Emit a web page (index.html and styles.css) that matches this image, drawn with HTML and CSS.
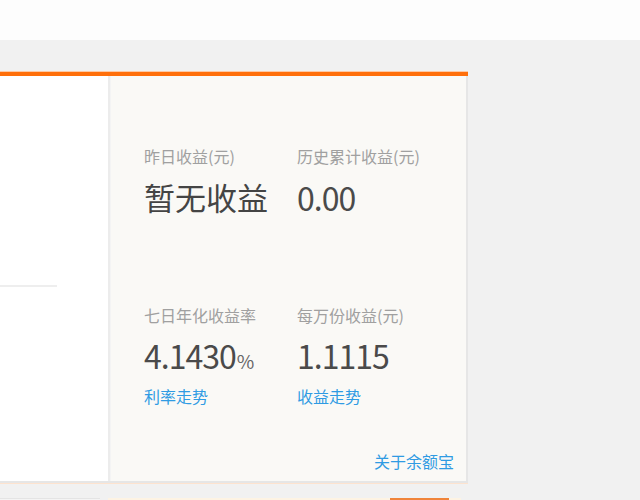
FILE: index.html
```html
<!DOCTYPE html>
<html lang="zh-CN">
<head>
<meta charset="utf-8">
<title>余额宝</title>
<link rel="stylesheet" href="styles.css">
</head>
<body>
<div class="header"></div>
<div class="main">
  <div class="panel">
    <div class="left-col">
      <div class="left-line"></div>
    </div>
    <div class="right-col">
      <div class="stats">
        <div class="stat">
          <div class="label">昨日收益(元)</div>
          <div class="value cjk">暂无收益</div>
        </div>
        <div class="stat">
          <div class="label">历史累计收益(元)</div>
          <div class="value num">0.00</div>
        </div>
        <div class="stat row2">
          <div class="label">七日年化收益率</div>
          <div class="value num">4.1430<span class="pct">%</span></div>
          <a class="link" href="#">利率走势</a>
        </div>
        <div class="stat row2">
          <div class="label">每万份收益(元)</div>
          <div class="value num">1.1115</div>
          <a class="link" href="#">收益走势</a>
        </div>
      </div>
      <a class="about" href="#">关于余额宝</a>
    </div>
  </div>
  <div class="bottom">
    <div class="bottom-left"></div>
    <div class="bottom-bar">
      <div class="bottom-btn"></div>
    </div>
  </div>
</div>
</body>
</html>
```

FILE: styles.css
```css
html, body {
  margin: 0;
  padding: 0;
}
body {
  background: #f1f1f1;
  font-family: "Noto Sans CJK SC", "Noto Sans", sans-serif;
  width: 640px;
  height: 500px;
  overflow: hidden;
}
.header {
  height: 40px;
  background: #fdfdfd;
}
.main {
  padding-top: 32px;
}
.panel {
  width: 468px;
  border-top: 4px solid #ff6f0a;
  box-shadow: 0 -1px 0 #fdc9a4, 0 1px 0 #fde3cf;
  display: flex;
  height: 405px;
  border-bottom: 2px solid #e6e6e6;
  box-sizing: content-box;
}
.left-col {
  width: 108px;
  background: #ffffff;
  border-right: 2px solid #ececec;
  padding-top: 209px;
}
.left-line {
  width: 57px;
  height: 2px;
  background: #eeeeee;
}
.right-col {
  flex: 1;
  background: #faf9f6;
  border-left: 1px solid #f4f4f4;
  border-right: 2px solid #e6e6e6;
  padding: 70px 12px 10px 33px;
  display: flex;
  flex-direction: column;
}
.stats {
  display: grid;
  grid-template-columns: 153px 153px;
}
.label {
  font-size: 16px;
  line-height: 20px;
  color: #a0a0a0;
  white-space: nowrap;
}
.value {
  margin-top: 11px;
  font-size: 31px;
  line-height: 40px;
  height: 40px;
  color: #444;
  white-space: nowrap;
}
.value.num {
  font-size: 32px;
  letter-spacing: -1px;
  color: #4a4a4a;
}
.row2 {
  margin-top: 88px;
}
.row2 .value {
  margin-top: 10px;
}
.pct {
  font-size: 19px;
  line-height: 1;
  color: #666;
  margin-left: 1px;
  letter-spacing: 0;
}
.link {
  display: block;
  margin-top: 11px;
  font-size: 16px;
  line-height: 20px;
  color: #2f9be3;
  text-decoration: none;
}
.about {
  margin-top: auto;
  align-self: flex-end;
  font-size: 16px;
  line-height: 20px;
  color: #2f9be3;
  text-decoration: none;
}
.bottom {
  margin-top: 15px;
  display: flex;
}
.bottom-left {
  width: 100px;
  height: 10px;
  background: #f4f4f4;
  border-top: 1px solid #e4e4e4;
}
.bottom-bar {
  margin-left: 8px;
  width: 353px;
  box-sizing: border-box;
  height: 10px;
  background: #fdf3e3;
  display: flex;
  justify-content: flex-end;
  padding-right: 12px;
}
.bottom-btn {
  width: 59px;
  height: 10px;
  background: #f0843a;
}
```
